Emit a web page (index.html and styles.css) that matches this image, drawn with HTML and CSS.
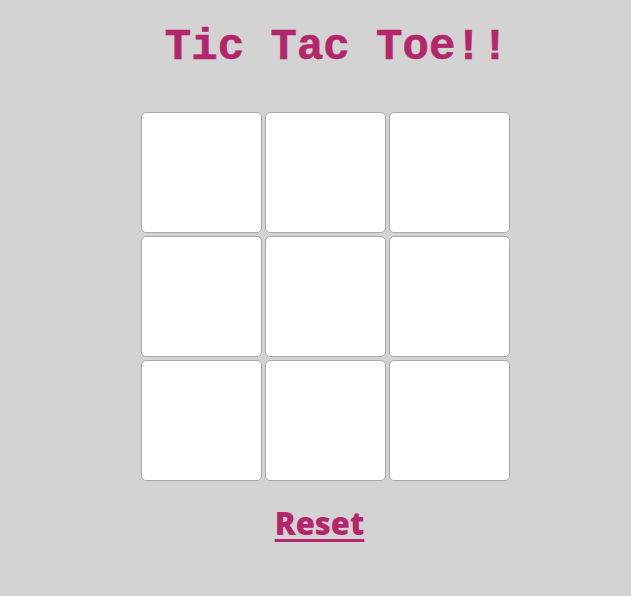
FILE: index.html
```html
<!DOCTYPE html>
<html>
<head>
<meta charset="utf-8">
<link rel="stylesheet" href="styles.css">
</head>
<body>
<main class="game">
  <h1 class="title">Tic Tac Toe!!</h1>
  <div class="board">
    <div class="cell"></div>
    <div class="cell"></div>
    <div class="cell"></div>
    <div class="cell"></div>
    <div class="cell"></div>
    <div class="cell"></div>
    <div class="cell"></div>
    <div class="cell"></div>
    <div class="cell"></div>
  </div>
  <a class="reset" href="#">Reset</a>
</main>
</body>
</html>
```

FILE: styles.css
```css
html, body {
  margin: 0;
  padding: 0;
  background: #d3d3d3;
}
.game {
  width: 631px;
  display: flex;
  flex-direction: column;
  align-items: center;
  padding-top: 23px;
  padding-left: 20px;
  box-sizing: border-box;
}
.title {
  margin: 0;
  font-family: "Liberation Mono", "Courier New", monospace;
  font-weight: bold;
  font-size: 44px;
  line-height: 48px;
  color: #b3266c;
  padding-left: 22px;
  -webkit-text-stroke: 0.6px #b3266c;
}
.board {
  margin-top: 41px;
  display: grid;
  grid-template-columns: repeat(3, 121px);
  grid-template-rows: repeat(3, 121px);
  gap: 3px;
}
.cell {
  background: #fff;
  border: 1px solid #a8a8a8;
  border-radius: 5px;
  box-sizing: border-box;
}
.reset {
  margin-top: 21px;
  font-family: "Open Sans", sans-serif;
  font-weight: 800;
  font-size: 31px;
  color: #b3266c;
  text-decoration: underline;
  text-decoration-thickness: 3px;
  text-underline-offset: 4px;
  margin-right: 12px;
}
```
